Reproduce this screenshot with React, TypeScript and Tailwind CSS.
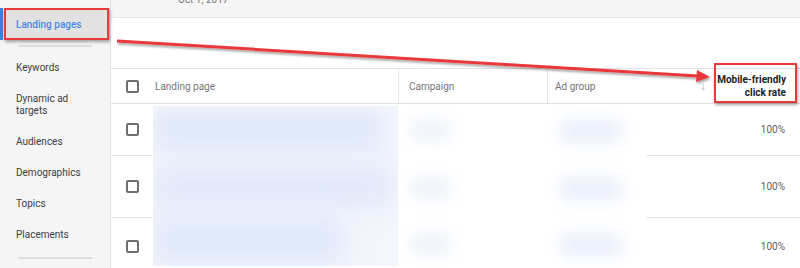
import React from 'react';

const navItems = ['Keywords', 'Dynamic ad targets', 'Audiences', 'Demographics', 'Topics', 'Placements'];

const rows = [
	{ h: 'h-[52px]', value: '100%' },
	{ h: 'h-[62px]', value: '100%' },
	{ h: 'h-[57px]', value: '100%' },
];

const Checkbox = () => (
	<div className="w-[13px] h-[13px] border-2 border-[#6f6f6f] rounded-[2px] bg-white" />
);

export default function App() {
	return (
		<div
			className="relative flex w-[800px] h-[268px] overflow-hidden bg-white text-[10px]"
			style={{ fontFamily: 'Roboto, "Liberation Sans", sans-serif' }}
		>
			{/* Sidebar */}
			<div className="w-[111px] shrink-0 bg-[#f5f5f5] border-r border-[#e3e3e3] pt-[8px]">
				<div className="relative h-[32px] flex items-center pl-[16px] bg-[#e2e2e2] text-[#4a86e8] font-medium">
					<div className="absolute left-0 top-0 bottom-0 w-[3px] bg-[#3f7ee8]" />
					Landing pages
					{/* red highlight */}
					<div className="absolute left-[4px] right-[1px] top-0 bottom-0 border-2 border-[#e8393b] shadow-[1px_2px_3px_rgba(0,0,0,0.35)]" />
				</div>
				<div className="mt-[5px] mx-[18px] h-[2px] bg-[#dddddd]" />
				<div className="mt-[5px]">
					{navItems.map((item) => (
						<div key={item} className="pl-[16px] pr-[8px] py-[9.5px] leading-[12px] text-[#3c4043]">
							{item}
						</div>
					))}
				</div>
				<div className="mt-[7px] mx-[18px] h-[2px] bg-[#dddddd]" />
			</div>

			{/* Main */}
			<div className="flex-1 flex flex-col">
				<div className="shrink-0 h-[18px] bg-[#f5f5f5] border-b border-[#e6e6e6] overflow-hidden pl-[67px]">
					<div className="-mt-[8px] text-[#777]">Oct 1, 2017</div>
				</div>
				<div className="shrink-0 h-[50px]" />
				{/* Header */}
				<div className="shrink-0 h-[36px] flex items-stretch border-t border-b border-[#e3e3e3] text-[#757575]">
					<div className="w-[41px] flex items-center justify-center pl-[2px]">
						<Checkbox />
					</div>
					<div className="w-[247px] flex items-center pl-[3px] border-r border-[#e6e6e6]">Landing page</div>
					<div className="w-[149px] flex items-center pl-[10px] border-r border-[#e6e6e6]">Campaign</div>
					<div className="flex-1 flex items-center pl-[7px]">Ad group</div>
					<div className="flex items-center pr-[8px] text-[#b0b0b0] text-[12px]">↓</div>
					<div className="relative w-[86px] shrink-0 flex flex-col justify-center items-end pr-[14px] leading-[13px] font-bold text-[#212121] whitespace-nowrap">
						<span>Mobile-friendly</span>
						<span>click rate</span>
						<div className="absolute left-[0px] right-[3px] top-[-6px] bottom-[0px] border-2 border-[#e8393b] shadow-[1px_2px_3px_rgba(0,0,0,0.35)]" />
					</div>
				</div>
				{/* Rows */}
				<div className="relative shrink-0">
					{rows.map((r, i) => (
						<div key={i} className={`${r.h} flex items-center`}>
							<div className="w-[41px] h-full flex items-center justify-center pl-[2px] border-b border-[#e6e6e6]">
								<Checkbox />
							</div>
							<div className="flex-1" />
							<div className="w-[154px] h-full flex items-center justify-end pr-[15px] text-[#616161] border-b border-[#e6e6e6]">
								{r.value}
							</div>
						</div>
					))}
					{/* blurred content */}
					<div className="absolute left-[42px] top-[2px] w-[245px] h-[160px] overflow-hidden bg-[#f3f6fc]">
						<div className="absolute left-0 top-[4px] w-[230px] h-[40px] bg-[#dfe7f8] blur-md" />
						<div className="absolute left-0 top-[60px] w-[240px] h-[40px] bg-[#e1e8f8] blur-md" />
						<div className="absolute left-0 top-[112px] w-[190px] h-[44px] bg-[#dfe7f8] blur-md" />
					</div>
					{[16, 74, 130].map((t) => (
						<React.Fragment key={t}>
							<div className="absolute left-[300px] w-[40px] h-[20px] bg-[#eef2fb] blur-sm" style={{ top: t }} />
							<div className="absolute left-[450px] w-[60px] h-[22px] bg-[#e8eefb] blur-sm" style={{ top: t }} />
						</React.Fragment>
					))}
				</div>
			</div>

			{/* Arrow overlay */}
			<svg className="absolute left-0 top-0 pointer-events-none" width="800" height="268">
				<defs>
					<filter id="sh" x="-10%" y="-50%" width="120%" height="200%">
						<feDropShadow dx="1" dy="2" stdDeviation="1.2" floodColor="#000" floodOpacity="0.35" />
					</filter>
				</defs>
				<g filter="url(#sh)">
					<line x1="117" y1="41" x2="698" y2="76" stroke="#e8393b" strokeWidth="3" />
					<polygon points="710,77 697,70 696,82" fill="#e8393b" />
				</g>
			</svg>
		</div>
	);
}
